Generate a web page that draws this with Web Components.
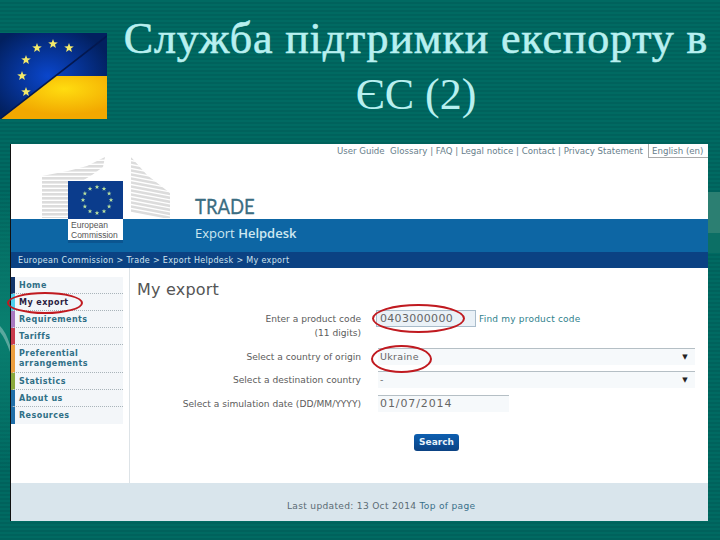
<!DOCTYPE html>
<html>
<head>
<meta charset="utf-8">
<style>
  html, body { margin: 0; padding: 0; }
  body { width: 720px; height: 540px; overflow: hidden; background: #00665f; }
</style>
</head>
<body>
<slide-page></slide-page>
<script>
const star = (x, y, r, fill) => {
  let pts = [];
  for (let i = 0; i < 10; i++) {
    const a = -Math.PI / 2 + i * Math.PI / 5;
    const d = i % 2 ? r * 0.42 : r;
    pts.push((x + d * Math.cos(a)).toFixed(1) + ',' + (y + d * Math.sin(a)).toFixed(1));
  }
  return `<polygon points="${pts.join(' ')}" fill="${fill}"/>`;
};

class FlagLogo extends HTMLElement {
  connectedCallback() {
    const stars = [[37,48],[53,44],[69,48],[26,60],[22,76],[26,92]];
    const root = this.attachShadow({ mode: 'open' });
    root.innerHTML = `
      <style>:host { display: block; width: 107px; height: 86px; flex: none; } svg { display: block; }</style>
      <svg width="107" height="86" viewBox="0 33 107 86">
        <defs>
          <radialGradient id="b" cx="45%" cy="50%" r="60%"><stop offset="0" stop-color="#0a46cc"/><stop offset="1" stop-color="#02205f"/></radialGradient>
          <radialGradient id="y" cx="60%" cy="30%" r="60%"><stop offset="0" stop-color="#ffdc10"/><stop offset="1" stop-color="#f2a800"/></radialGradient>
        </defs>
        <rect x="0" y="33" width="107" height="86" fill="url(#b)"/>
        <polygon points="0,119 55,76 107,76 107,119" fill="url(#y)"/>
        <line x1="0" y1="119" x2="107" y2="36" stroke="#04184f" stroke-width="1.6"/>
        ${stars.map(s => star(s[0], s[1], 5, '#f4ea6a')).join('')}
      </svg>`;
  }
}
customElements.define('flag-logo', FlagLogo);

class EcLogo extends HTMLElement {
  connectedCallback() {
    let ring = '';
    for (let i = 0; i < 12; i++) {
      const a = i * Math.PI / 6;
      ring += star(29 + 14 * Math.sin(a), 19 - 13 * Math.cos(a), 2.4, '#b9e0a0');
    }
    let stripes = '';
    for (let y = 0; y < 62; y += 4) {
      stripes += `<rect x="0" y="${y}" width="66" height="2.6" fill="#dcdcdc"/>`;
      stripes += `<polygon points="88,${y - 8} 130,${y} 130,${y + 2.6} 88,${y - 5.4}" fill="#dcdcdc"/>`;
    }
    const root = this.attachShadow({ mode: 'open' });
    root.innerHTML = `
      <style>
        :host { display: block; width: 130px; height: 86px; position: relative; }
        svg { display: block; }
        .mark { position: absolute; left: 26px; top: 24px; width: 55px; height: 38px; background: #0b3c8c; }
        .words { position: absolute; left: 0; right: 0; top: 38px; background: #fff; padding: 1px 0 0 3px;
          height: 20px; font: 8.5px/10px "Liberation Sans", sans-serif; color: #555; border-bottom: 3px solid #0b5590; }
      </style>
      <svg width="130" height="62" viewBox="0 0 130 62">
        <defs>
          <clipPath id="l"><polygon points="0,19 26,14 45,9 63,0 61,10 50,18 40,24 26,24 26,61 0,61"/></clipPath>
          <clipPath id="r"><polygon points="89,0 105,18 128,36 128,61 89,61"/></clipPath>
        </defs>
        <g clip-path="url(#l)">${stripes}</g>
        <g clip-path="url(#r)">${stripes}</g>
      </svg>
      <div class="mark">
        <svg width="55" height="38" viewBox="0 0 55 38">${ring}</svg>
        <div class="words">European<br>Commission</div>
      </div>`;
  }
}
customElements.define('ec-logo', EcLogo);

class SideMenu extends HTMLElement {
  connectedCallback() {
    const items = [
      ['Home', '#12356b', 17],
      ['My export', '#4fd0ee', 17, 'cur'],
      ['Requirements', '#a878c0', 17],
      ['Tariffs', '#c83a4c', 17],
      ['Preferential<br>arrangements', '#eb9c3c', 28],
      ['Statistics', '#8aa83c', 17],
      ['About us', '#1f6ea8', 17],
      ['Resources', '#1f6ea8', 17, 'last'],
    ];
    const root = this.attachShadow({ mode: 'open' });
    root.innerHTML = `
      <style>
        :host { display: block; width: 112px; margin: 9px 0 0 0; flex: none; align-self: flex-start; background: #f3f6f9;
          font: bold 8px/10px "DejaVu Sans", sans-serif; letter-spacing: .45px; color: #2f6f86; }
        a { display: block; box-sizing: border-box; padding: 4px 0 0 4px; border-left: 4px solid; border-bottom: 1px dotted #a9b4ba; }
        .last { border-bottom: 0; }
        .cur { color: #2b1d42; }
      </style>
      ${items.map(i => `<a class="${i[3] || ''}" style="border-left-color:${i[1]};height:${i[2]}px">${i[0]}</a>`).join('')}`;
  }
}
customElements.define('side-menu', SideMenu);

class FormRow extends HTMLElement {
  constructor() {
    super();
    this.attachShadow({ mode: 'open' }).innerHTML = `
      <style>
        :host { display: grid; grid-template-columns: 224px 1fr; column-gap: 17px; align-items: start; color: #5c5c5c;
          font: 9.1px/14px "DejaVu Sans", sans-serif; }
        .label { text-align: right; padding-top: 2px; white-space: nowrap; }
      </style>
      <div class="label"><slot name="label"></slot></div>
      <div><slot></slot></div>`;
  }
}
customElements.define('form-row', FormRow);

class FakeField extends HTMLElement {
  constructor() {
    super();
    this.attachShadow({ mode: 'open' }).innerHTML = `
      <style>
        :host { display: flex; box-sizing: border-box; height: 17px; align-items: center; justify-content: space-between;
          padding: 0 7px 0 2px; background: #f6f9fb; border-top: 1px solid #b5bfc5;
          font: 9.5px/14px "DejaVu Sans", sans-serif; letter-spacing: .3px; color: #666; }
        :host([boxed]) { background: #eaf1f7; border: 1px solid #a9bccb; margin-left: -2px; padding-left: 3px; }
        .arrow { font-size: 7px; color: #222; }
      </style>
      <slot></slot><span class="arrow"><slot name="arrow"></slot></span>`;
  }
}
customElements.define('fake-field', FakeField);

class HelpdeskShot extends HTMLElement {
  constructor() {
    super();
    this.attachShadow({ mode: 'open' }).innerHTML = `
      <style>
        :host { display: flex; flex-direction: column; box-sizing: border-box; width: 698px; height: 377px; margin-left: 10px;
          background: #fff; border-left: 1px solid #111; position: relative; font-family: "DejaVu Sans", sans-serif; }
        .top { display: flex; justify-content: flex-end; align-items: flex-start; height: 15px; font-size: 8.65px; line-height: 15px; color: #68808c; white-space: nowrap; }
        .top span { padding-right: 5px; }
        .lang { border-left: 1px solid #aaa; border-bottom: 1px solid #aaa; padding: 0 0 0 3px; width: 60px; box-sizing: border-box; height: 14px; line-height: 15px; }
        .head { height: 60px; position: relative; display: flex; align-items: flex-end; }
        .head ec-logo { position: absolute; left: 31px; top: -2px; z-index: 1; }
        .trade { margin-left: 184px; padding-bottom: 1px; font: 22px/24px Lato, sans-serif; color: #3b6d82; transform: scaleX(.84); transform-origin: left; -webkit-text-stroke: .3px #3b6d82; }
        .blue { height: 33px; background: #0d66a4; padding-left: 184px; box-sizing: border-box; font: 13px/29px "Open Sans", sans-serif; color: #cfe8f0; }
        .blue b { font-weight: 600; }
        .crumb { height: 16px; background: #0b4283; color: #cfe2ee; font-size: 8px; line-height: 17px; padding-left: 7px; letter-spacing: .33px; white-space: nowrap; }
        .main { flex: 1; display: flex; min-height: 0; }
        .content { flex: 1; margin-left: 6px; border-left: 1px solid #dde3e7; padding-left: 7px; position: relative; }
        h1 { margin: 11px 0 0; font: 400 16px/22px "DejaVu Sans", sans-serif; color: #555; letter-spacing: .2px; }
        .form { margin-top: 9px; display: flex; flex-direction: column; width: 558px; }
        .foot { height: 38px; background: #d9e5ec; padding: 17px 0 0 276px; box-sizing: border-box; font-size: 9.1px; line-height: 12px; color: #5b6b74; letter-spacing: .3px; }
        .foot a { color: #39708a; }
        .search { display: block; width: 45px; height: 17px; margin: 22px 0 0 277px; border-radius: 3px; background: linear-gradient(#0d5fb0, #0b4283);
          font: bold 9px/17px "DejaVu Sans", sans-serif; color: #e8f2f8; text-align: center; }
        .ring { position: absolute; border: 2px solid #c01a20; border-radius: 50%; box-sizing: border-box; }
      </style>
      <div class="top"><span>User Guide &nbsp;Glossary | FAQ | Legal notice | Contact | Privacy Statement</span><div class="lang">English (en)</div></div>
      <div class="head"><ec-logo></ec-logo><div class="trade">TRADE</div></div>
      <div class="blue">Export <b>Helpdesk</b></div>
      <div class="crumb">European Commission &gt; Trade &gt; Export Helpdesk &gt; My export</div>
      <div class="main">
        <side-menu></side-menu>
        <div class="content">
          <h1>My export</h1>
          <div class="form"><slot></slot></div>
          <div class="search">Search</div>
        </div>
      </div>
      <div class="foot">Last updated: 13 Oct 2014 <a>Top of page</a></div>
      <div class="ring" style="left:-4px;top:148px;width:76px;height:22px"></div>
      <div class="ring" style="left:361px;top:160px;width:93px;height:29px"></div>
      <div class="ring" style="left:360px;top:201px;width:61px;height:28px"></div>`;
  }
}
customElements.define('helpdesk-shot', HelpdeskShot);

class SlidePage extends HTMLElement {
  constructor() {
    super();
    this.attachShadow({ mode: 'open' }).innerHTML = `
      <style>
        :host { display: block; width: 720px; height: 540px; overflow: hidden; position: relative;
          background: repeating-linear-gradient(#006a62 0 2px, #00625c 2px 4px); }
        header { display: flex; height: 144px; }
        flag-logo { margin-top: 33px; }
        h1 { margin: 11px 0 0 9px; width: 600px; text-align: center; font: 400 44px/56px "Liberation Serif", serif; color: #b8f0f0; white-space: nowrap; }
        h1 span { letter-spacing: .85px; -webkit-text-stroke: .6px #b8f0f0; }
        .deco { position: absolute; left: 0; top: 0; z-index: 0; }
        header, helpdesk-shot { position: relative; z-index: 1; }
      </style>
      <svg class="deco" width="720" height="540" viewBox="0 0 720 540">
        <defs><linearGradient id="s" x1="0" y1="0" x2="0" y2="1">
          <stop offset="0" stop-color="#0a8070" stop-opacity="0"/><stop offset=".5" stop-color="#0a8070"/><stop offset="1" stop-color="#0a8070" stop-opacity="0"/>
        </linearGradient></defs>
        <rect x="0" y="190" width="10" height="280" fill="url(#s)"/>
        <path d="M0 326 Q6 332 10 345 L10 352 Q5 338 0 332 Z" fill="#5aa89e"/>
        <rect x="708" y="192" width="12" height="41" fill="#2c7f72"/>
        <rect x="708" y="233" width="12" height="20" fill="#0c6f65"/>
      </svg>
      <header><flag-logo></flag-logo><h1><span>Служба підтримки експорту в</span><br>ЄС (2)</h1></header>
      <helpdesk-shot>
        <form-row style="height:38px"><span slot="label">Enter a product code<br>(11 digits)</span>
          <div style="display:flex;align-items:center"><fake-field boxed style="width:100px;font-size:11px;letter-spacing:.3px">0403000000</fake-field><a style="margin-left:3px;color:#2f7f8c;font-size:9px;letter-spacing:.2px">Find my product code</a></div></form-row>
        <form-row style="height:23px"><span slot="label">Select a country of origin</span>
          <fake-field>Ukraine<span slot="arrow">▼</span></fake-field></form-row>
        <form-row style="height:24px"><span slot="label">Select a destination country</span>
          <fake-field>-<span slot="arrow">▼</span></fake-field></form-row>
        <form-row style="height:17px"><span slot="label">Select a simulation date (DD/MM/YYYY)</span>
          <fake-field style="width:131px;font-size:11px;letter-spacing:.9px">01/07/2014</fake-field></form-row>
      </helpdesk-shot>`;
  }
}
customElements.define('slide-page', SlidePage);
</script>
</body>
</html>
